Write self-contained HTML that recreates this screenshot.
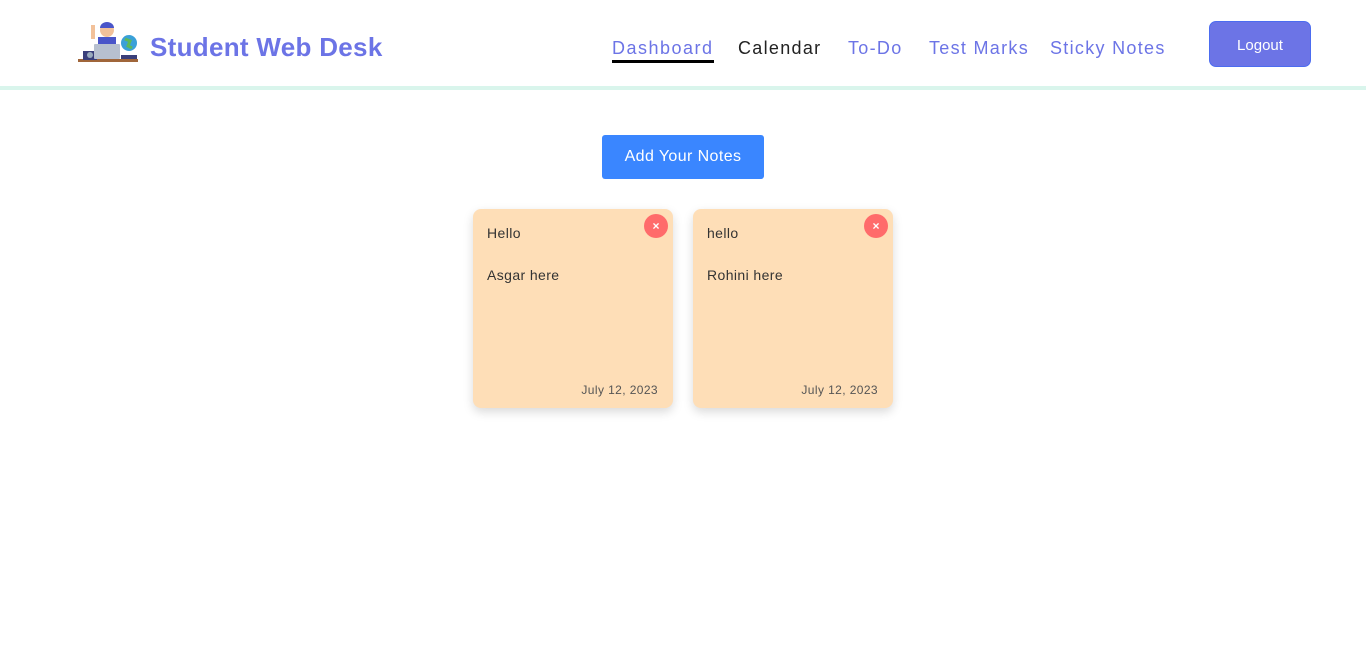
<!DOCTYPE html>
<html><head><style>
*{margin:0;padding:0;box-sizing:border-box}
body{width:1366px;height:651px;background:#fff;font-family:"Liberation Sans",sans-serif;position:relative;overflow:hidden}
.hdr{position:absolute;left:0;top:0;width:1366px;height:90px;border-bottom:4px solid #d9f5ec}
.brand{position:absolute;left:150px;top:32px;font-size:26px;font-weight:bold;color:#6c74e6;letter-spacing:0.3px}
.nav a{position:absolute;top:38px;font-size:18px;color:#6c74e6;text-decoration:none;letter-spacing:1.3px}
.logout{position:absolute;left:1209px;top:21px;width:102px;height:46px;background:#6c74e6;border:1px solid #4c6cf0;border-radius:7px;color:#fff;font-size:15px;text-align:center;line-height:47px}
.add{position:absolute;left:602px;top:135px;width:162px;height:44px;background:#3a86ff;border-radius:3px;color:#fff;font-size:16px;text-align:center;line-height:44px;letter-spacing:0.4px}
.note{position:absolute;top:209px;width:200px;height:199px;background:#fedeb7;border-radius:8px;box-shadow:0 4px 10px rgba(0,0,0,.15);color:#333;font-size:14px;letter-spacing:0.4px}
.note .t{position:absolute;left:14px;top:16px}
.note .b{position:absolute;left:14px;top:58px}
.note .d{position:absolute;right:15px;top:174px;font-size:12px;color:#555}
.note .x{position:absolute;left:171px;top:5px;width:24px;height:24px;border-radius:50%;background:#ff6b6b;color:#fff;font-size:12px;font-weight:bold;text-align:center;line-height:24px;letter-spacing:0}
</style></head><body>
<div class="hdr">
<svg style="position:absolute;left:77px;top:21px" width="62" height="44" viewBox="0 0 62 44">
<rect x="1" y="38" width="60" height="3" fill="#a0663a"/>
<rect x="6" y="30" width="14" height="9" fill="#3a3f7a"/>
<circle cx="13" cy="34" r="3" fill="#9ab"/>
<circle cx="30" cy="9" r="7" fill="#f2c19a"/>
<path d="M23 7a7 6 0 0 1 14 0z" fill="#4a55c9"/>
<rect x="21" y="16" width="18" height="8" fill="#4a55c9"/>
<rect x="17" y="23" width="26" height="15" rx="1" fill="#b7c0cf"/>
<circle cx="52" cy="22" r="8" fill="#3aa0d8"/>
<path d="M48 18l5 2-2 5 4 2" stroke="#5cb85c" stroke-width="3" fill="none"/>
<rect x="44" y="34" width="16" height="4" fill="#3a3f7a"/>
<rect x="14" y="4" width="4" height="14" fill="#f2c19a"/>
</svg>
<div class="brand">Student Web Desk</div>
<div class="nav">
<a style="left:612px;border-bottom:3px solid #000;padding-bottom:1px;letter-spacing:1.5px">Dashboard</a>
<a style="left:738px;color:#222">Calendar</a>
<a style="left:848px">To-Do</a>
<a style="left:929px">Test Marks</a>
<a style="left:1050px">Sticky Notes</a>
</div>
<div class="logout">Logout</div>
</div>
<div class="add">Add Your Notes</div>
<div class="note" style="left:473px"><div class="t">Hello</div><div class="b">Asgar here</div><div class="d">July 12, 2023</div><div class="x">×</div></div>
<div class="note" style="left:693px"><div class="t">hello</div><div class="b">Rohini here</div><div class="d">July 12, 2023</div><div class="x">×</div></div>
</body></html>
